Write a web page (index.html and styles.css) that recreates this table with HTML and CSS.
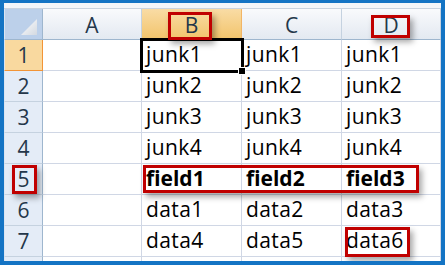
FILE: index.html
```html
<!DOCTYPE html>
<html>
<head>
<meta charset="utf-8">
<link rel="stylesheet" href="styles.css">
</head>
<body>
<div class="frame">
  <div class="topband"></div>
  <div class="sheet">
    <div class="corner"><svg width="16" height="16" viewBox="0 0 16 16"><defs><linearGradient id="tg" x1="0" y1="0" x2="1" y2="1"><stop offset="0" stop-color="#ffffff"/><stop offset="1" stop-color="#d3d9e1"/></linearGradient></defs><polygon points="16,0 16,16 0,16" fill="url(#tg)"/></svg></div>
    <div class="colh">A</div>
    <div class="colh sel">B</div>
    <div class="colh">C</div>
    <div class="colh">D</div>

    <div class="rowh sel">1</div><div class="cell"></div><div class="cell active">junk1</div><div class="cell">junk1</div><div class="cell">junk1</div>
    <div class="rowh">2</div><div class="cell"></div><div class="cell">junk2</div><div class="cell">junk2</div><div class="cell">junk2</div>
    <div class="rowh">3</div><div class="cell"></div><div class="cell">junk3</div><div class="cell">junk3</div><div class="cell">junk3</div>
    <div class="rowh">4</div><div class="cell"></div><div class="cell">junk4</div><div class="cell">junk4</div><div class="cell">junk4</div>
    <div class="rowh">5</div><div class="cell"></div><div class="cell bold">field1</div><div class="cell bold">field2</div><div class="cell bold">field3</div>
    <div class="rowh">6</div><div class="cell"></div><div class="cell">data1</div><div class="cell">data2</div><div class="cell">data3</div>
    <div class="rowh">7</div><div class="cell"></div><div class="cell">data4</div><div class="cell">data5</div><div class="cell">data6</div>
    <div class="rowh"></div><div class="cell"></div><div class="cell"></div><div class="cell"></div><div class="cell"></div>

    <div class="mark m-b"></div>
    <div class="mark m-d"></div>
    <div class="mark m-5"></div>
    <div class="mark m-field"></div>
    <div class="mark m-data6"></div>
  </div>
</div>
</body>
</html>
```
FILE: styles.css
```css
html, body {
  margin: 0;
  padding: 0;
  background: #ffffff;
}
body {
  width: 448px;
  height: 266px;
  overflow: hidden;
}
.frame {
  width: 437px;
  height: 258px;
  border-style: solid;
  border-color: #1474c4;
  border-width: 3px 4px 4px 4px;
  background: #ffffff;
  overflow: hidden;
}
.topband {
  height: 5px;
  background: #f4f6f9;
  border-bottom: 1px solid #c9d3df;
}
.sheet {
  position: relative;
  display: grid;
  grid-template-columns: 39px 99px 100px 100px 99px;
  grid-template-rows: 31px repeat(7, 31px) 10px;
  font-family: "Open Sans", "Liberation Sans", sans-serif;
  font-size: 21px;
}
.corner {
  box-sizing: border-box;
  background: #bcd0ea;
  border-right: 1px solid #9eb6ce;
  border-bottom: 1px solid #9eb6ce;
  border-left: 1px solid #dbe5f2;
  display: flex;
  align-items: flex-end;
  justify-content: flex-end;
  padding: 0 5px 4px 0;
}
.corner svg { display: block; }
.colh {
  box-sizing: border-box;
  background: linear-gradient(#f9fafc, #e3e9f1);
  border-right: 1px solid #c5d2e0;
  border-bottom: 1px solid #9eb6ce;
  color: #24374a;
  display: flex;
  align-items: center;
  justify-content: center;
  font-size: 21px;
  padding-top: 1px;
}
.colh.sel {
  background: linear-gradient(#f9dca5, #f2c46c);
  border-bottom: 1px solid #f29436;
  border-right: 1px solid #f2b565;
}
.rowh {
  box-sizing: border-box;
  background: #e4ecf7;
  border-right: 1px solid #9eb6ce;
  border-bottom: 1px solid #c5d2e0;
  border-left: 1px solid #dbe5f2;
  color: #24374a;
  display: flex;
  align-items: center;
  justify-content: center;
  font-size: 21px;
}
.rowh.sel {
  background: #f9d99f;
  border-right: 1px solid #f29436;
  border-bottom: 1px solid #f29436;
}
.cell {
  box-sizing: border-box;
  border-right: 1px solid #d0d7e5;
  border-bottom: 1px solid #d0d7e5;
  color: #000000;
  display: flex;
  align-items: flex-end;
  padding: 0 0 2px 4px;
  letter-spacing: 0.4px;
  white-space: nowrap;
  overflow: visible;
}
.cell.bold { font-weight: bold; letter-spacing: 0; }
.cell.active {
  position: relative;
  outline: 3px solid #000000;
  outline-offset: -1px;
  z-index: 1;
}
.cell.active::after {
  content: "";
  position: absolute;
  right: -5px;
  bottom: -5px;
  width: 6px;
  height: 6px;
  background: #000000;
  border: 1px solid #ffffff;
}
.mark {
  position: absolute;
  box-sizing: border-box;
  border: 3px solid #c00000;
  box-shadow: 3px 4px 6px rgba(0, 0, 0, 0.35);
  z-index: 2;
}
.m-b { left: 164px; top: 3px; width: 44px; height: 28px; }
.m-d { left: 367px; top: 6px; width: 39px; height: 23px; }
.m-5 { left: 8px; top: 156px; width: 25px; height: 29px; }
.m-field { left: 139px; top: 156px; width: 276px; height: 28px; }
.m-data6 { left: 341px; top: 218px; width: 65px; height: 30px; }
```
